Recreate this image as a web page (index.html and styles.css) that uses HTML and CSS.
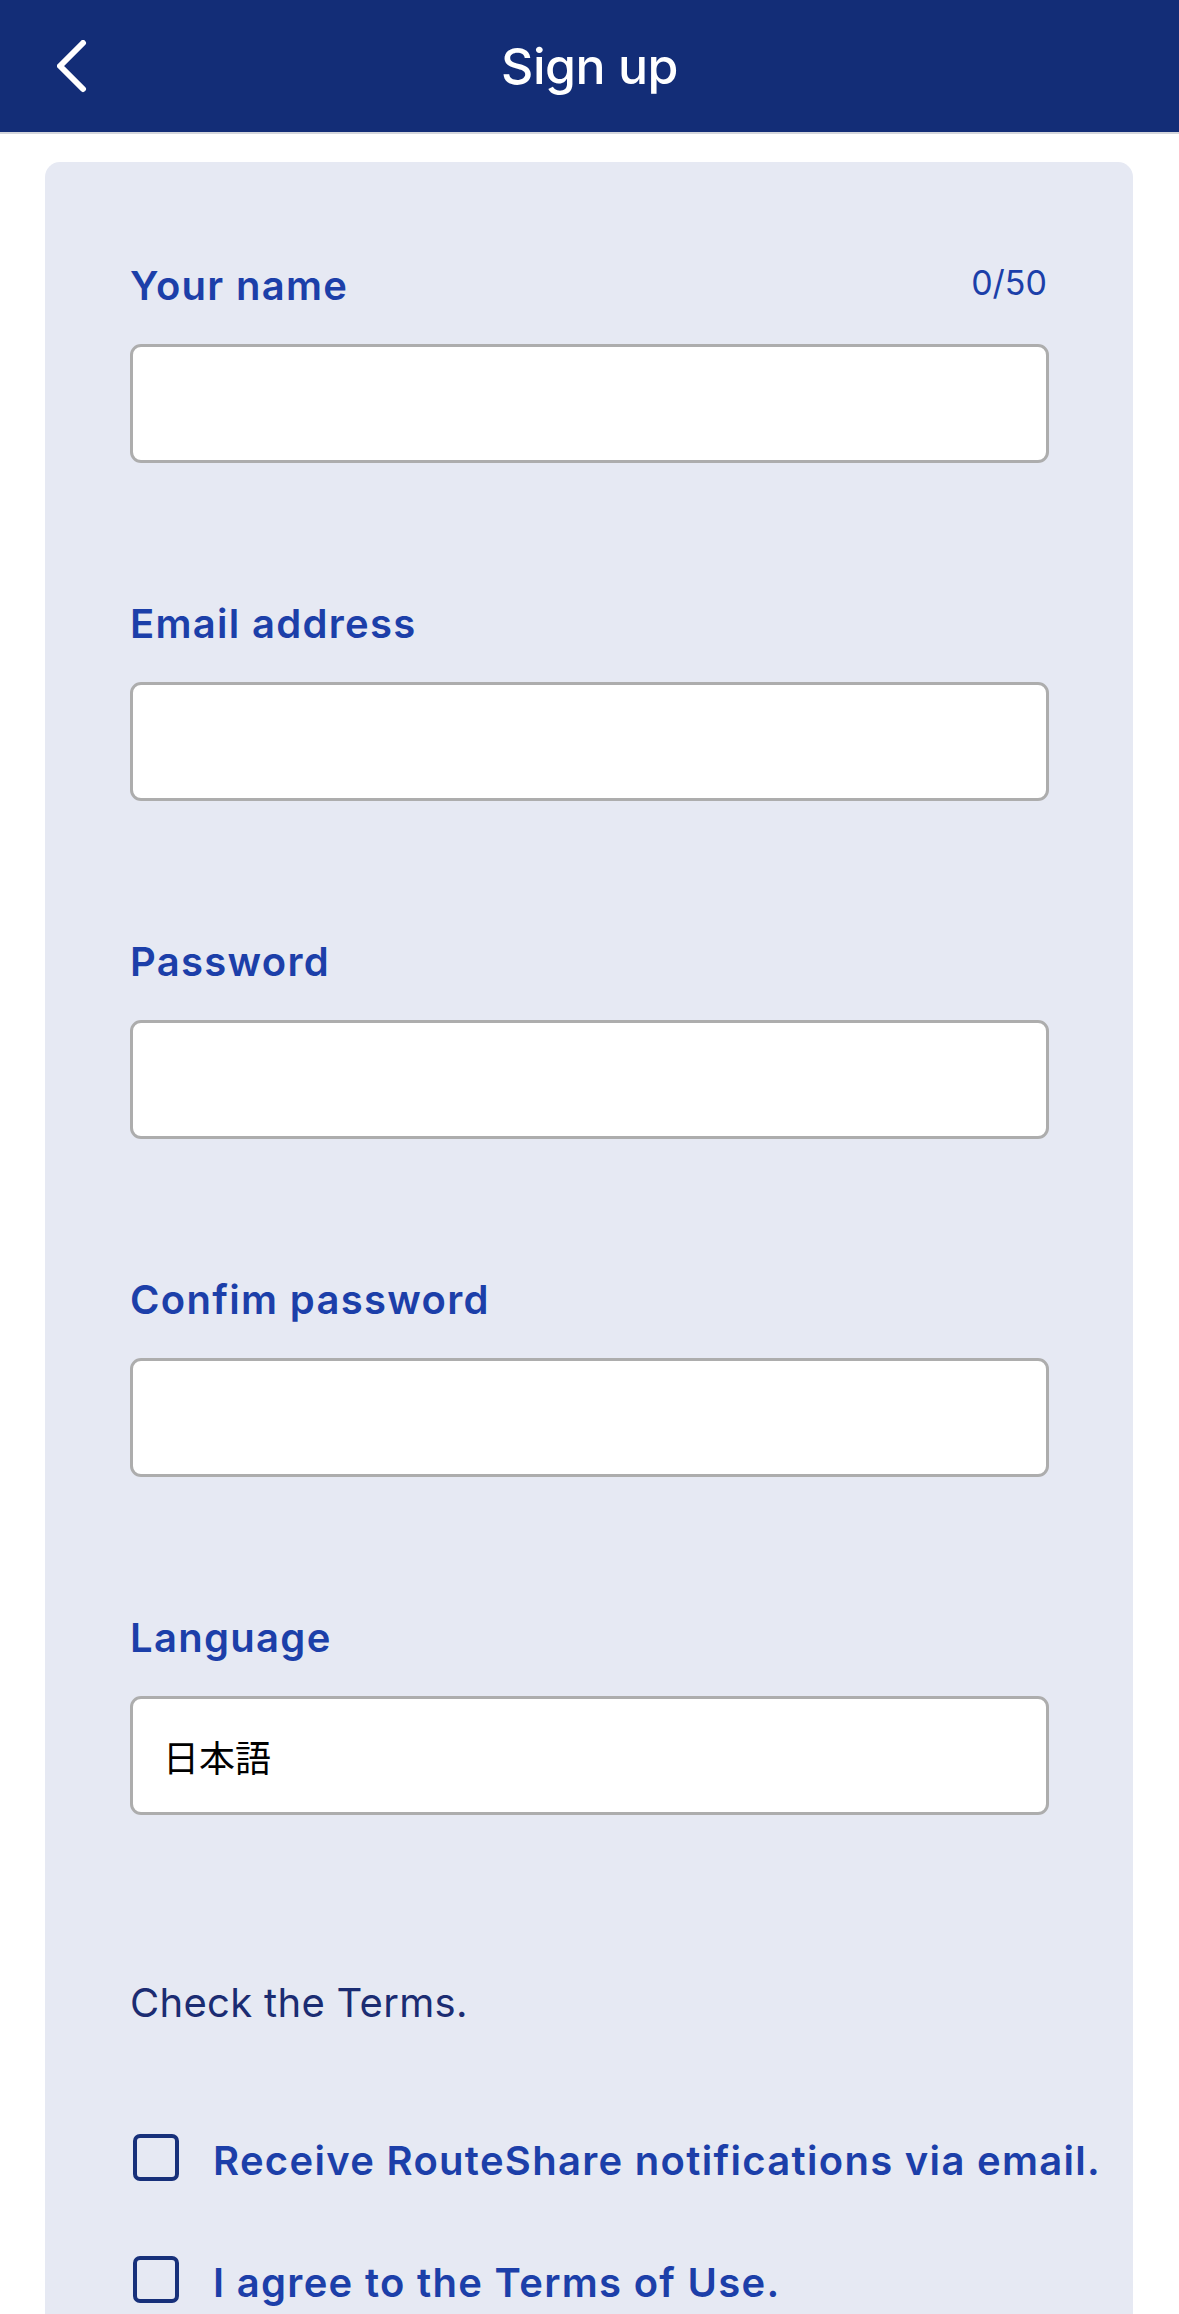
FILE: index.html
```html
<!DOCTYPE html>
<html lang="en">
<head>
<meta charset="utf-8">
<title>Sign up</title>
<link rel="stylesheet" href="styles.css">
</head>
<body>
<header class="topbar">
  <button class="back" aria-label="Back">
    <svg width="40" height="60" viewBox="0 0 40 60" aria-hidden="true">
      <polyline points="26,3 3,26 26,49" fill="none" stroke="#fff" stroke-width="6" stroke-linecap="round" stroke-linejoin="round"/>
    </svg>
  </button>
  <h1 class="title">Sign up</h1>
</header>
<main class="card">
  <div class="field">
    <div class="label-row">
      <label class="label" for="name">Your name</label>
      <span class="counter">0/50</span>
    </div>
    <input class="input" id="name" type="text">
  </div>
  <div class="field">
    <div class="label-row"><label class="label" for="email">Email address</label></div>
    <input class="input" id="email" type="email">
  </div>
  <div class="field">
    <div class="label-row"><label class="label" for="pw">Password</label></div>
    <input class="input" id="pw" type="password">
  </div>
  <div class="field">
    <div class="label-row"><label class="label" for="pw2">Confim password</label></div>
    <input class="input" id="pw2" type="password">
  </div>
  <div class="field">
    <div class="label-row"><label class="label" for="lang">Language</label></div>
    <div class="input select" id="lang">日本語</div>
  </div>
  <p class="terms-note">Check the Terms.</p>
  <div class="check-list">
    <label class="check-row"><span class="box"></span><span class="check-text">Receive RouteShare notifications via email.</span></label>
    <label class="check-row"><span class="box"></span><span class="check-text">I agree to the Terms of Use.</span></label>
  </div>
</main>
</body>
</html>
```
FILE: styles.css
```css
* { box-sizing: border-box; }
html, body { margin: 0; padding: 0; background: #fff; }
body {
  font-family: Inter, "Noto Sans", "Liberation Sans", "Noto Sans CJK JP", sans-serif;
  width: 1179px;
  height: 2314px;
  overflow: hidden;
}
.topbar {
  position: relative;
  height: 134px;
  background: #132d77;
  border-bottom: 2px solid #d4d6dc;
  display: flex;
  align-items: center;
  justify-content: center;
}
.back {
  position: absolute;
  left: 57px;
  top: 40px;
  padding: 0;
  margin: 0;
  border: 0;
  background: none;
  width: 40px;
  height: 60px;
  display: block;
}
.back svg { display: block; }
.title {
  margin: 0;
  color: #fff;
  font-size: 50px;
  line-height: 132px;
  font-weight: 500;
  letter-spacing: -0.5px;
}
.card {
  margin: 28px 46px 0 45px;
  background: #e6e9f3;
  border-radius: 15px 15px 0 0;
  padding: 100px 84px 40px 85px;
  min-height: 2200px;
}
.field { margin-bottom: 137px; }
.field:nth-child(5) { margin-bottom: 164px; }
.label-row {
  display: flex;
  justify-content: space-between;
  align-items: flex-start;
  margin-bottom: 34px;
}
.label {
  font-size: 40px;
  line-height: 48px;
  font-weight: 600;
  color: #1c3fa9;
  letter-spacing: 1.3px;
}
.counter {
  font-size: 34px;
  line-height: 41px;
  color: #1c3fa9;
  font-weight: 400;
  padding-right: 2px;
}
.input {
  display: block;
  width: 100%;
  height: 119px;
  margin: 0;
  border: 3px solid #adadad;
  border-radius: 11px;
  background: #fff;
  font-size: 36px;
  padding: 0 30px;
  outline: none;
  -webkit-appearance: none;
  appearance: none;
}
.select {
  display: flex;
  align-items: center;
  font-family: "Noto Sans CJK JP", sans-serif;
  color: #000;
  font-size: 36px;
}
.terms-note {
  margin: 0 0 110px;
  font-size: 40px;
  line-height: 48px;
  color: #1b2c72;
  font-weight: 400;
  letter-spacing: 0.3px;
}
.check-list {
  display: flex;
  flex-direction: column;
  gap: 74px;
}
.check-row {
  display: flex;
  align-items: center;
  gap: 34px;
  padding-left: 3px;
}
.box {
  flex: none;
  width: 46px;
  height: 47px;
  border: 4px solid #17307a;
  border-radius: 7px;
  margin-top: -8px;
}
.check-text {
  font-size: 40px;
  line-height: 48px;
  font-weight: 600;
  color: #1c3fa9;
  letter-spacing: 1.3px;
  white-space: nowrap;
}
```
